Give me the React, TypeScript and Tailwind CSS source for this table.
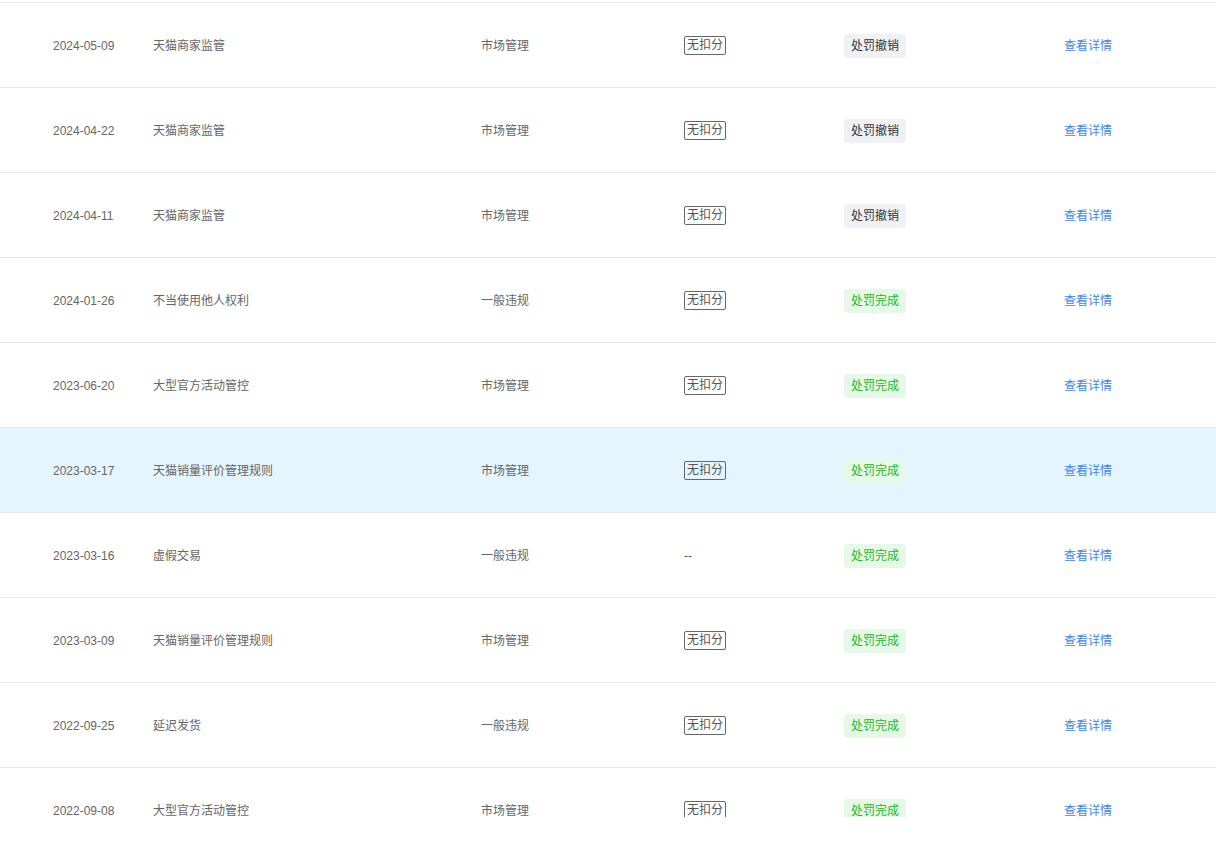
const rows = [
  { date: '2024-05-09', name: '天猫商家监管', type: '市场管理', score: true, done: false },
  { date: '2024-04-22', name: '天猫商家监管', type: '市场管理', score: true, done: false },
  { date: '2024-04-11', name: '天猫商家监管', type: '市场管理', score: true, done: false },
  { date: '2024-01-26', name: '不当使用他人权利', type: '一般违规', score: true, done: true },
  { date: '2023-06-20', name: '大型官方活动管控', type: '市场管理', score: true, done: true },
  { date: '2023-03-17', name: '天猫销量评价管理规则', type: '市场管理', score: true, done: true, active: true },
  { date: '2023-03-16', name: '虚假交易', type: '一般违规', score: false, done: true },
  { date: '2023-03-09', name: '天猫销量评价管理规则', type: '市场管理', score: true, done: true },
  { date: '2022-09-25', name: '延迟发货', type: '一般违规', score: true, done: true },
  { date: '2022-09-08', name: '大型官方活动管控', type: '市场管理', score: true, done: true },
];

export default function App() {
  return (
    <div className="h-[848px] bg-white font-['Liberation_Sans','Noto_Sans_CJK_SC',sans-serif] text-[12px] text-[#666]">
      <div className="h-[817px] overflow-hidden pt-[2px]">
        <div className="border-t border-[#e8e8e8]">
          {rows.map((r, i) => (
            <div
              key={i}
              className={`flex h-[85px] items-center border-b border-[#e8e8e8] pt-[1px] ${r.active ? 'bg-[#e4f5fd]' : 'bg-white'}`}
            >
              <div className="w-[153px] pl-[53px]">{r.date}</div>
              <div className="w-[328px]">{r.name}</div>
              <div className="w-[203px]">{r.type}</div>
              <div className="w-[160px]">
                {r.score ? (
                  <span className="inline-block h-[19px] rounded-[2px] border border-[#666] px-[2px] leading-[17px] text-[#555]">无扣分</span>
                ) : (
                  <span className="text-[#555]">--</span>
                )}
              </div>
              <div className="w-[220px]">
                {r.done ? (
                  <span className="inline-block h-[24px] rounded-[4px] bg-[#e6f9e6] px-[7px] leading-[24px] text-[#22b822]">处罚完成</span>
                ) : (
                  <span className="inline-block h-[24px] rounded-[4px] bg-[#f0f1f5] px-[7px] leading-[24px] text-[#333]">处罚撤销</span>
                )}
              </div>
              <div className="text-[#3d84f7]">查看详情</div>
            </div>
          ))}
        </div>
      </div>
    </div>
  );
}
